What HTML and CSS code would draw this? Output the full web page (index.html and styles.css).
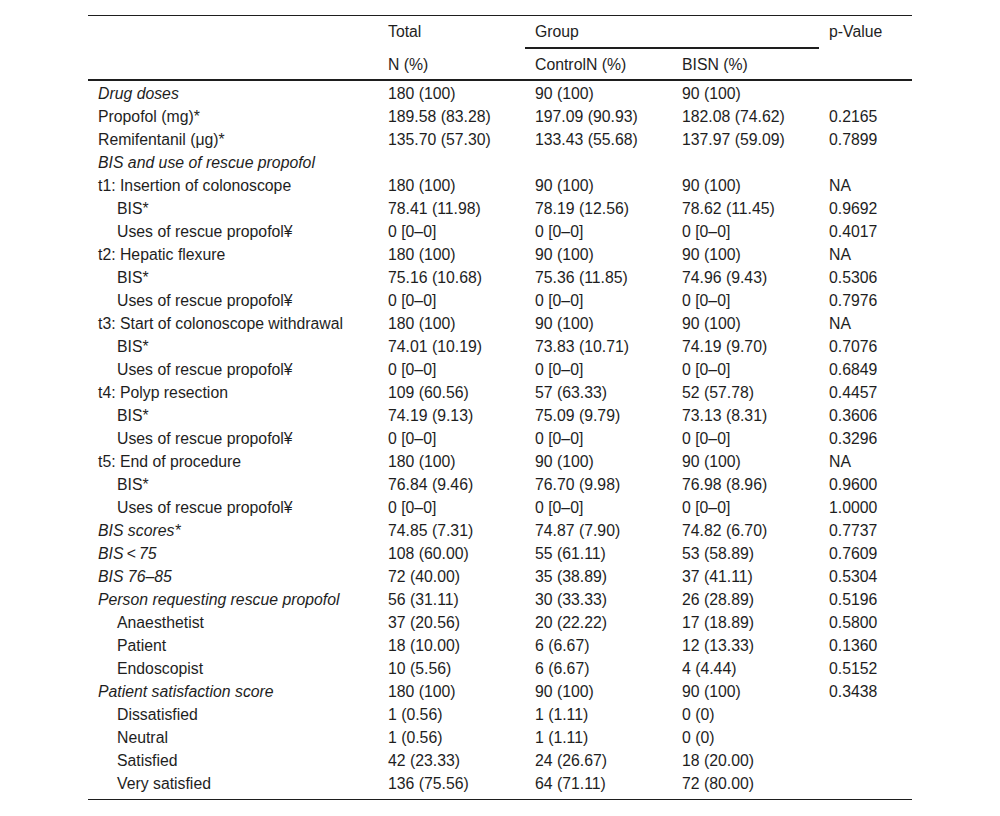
FILE: index.html
```html
<!DOCTYPE html>
<html lang="en">
<head>
<meta charset="utf-8">
<title>Table</title>
<link rel="stylesheet" href="styles.css">
</head>
<body>
<table class="data">
  <colgroup>
    <col class="c-label"><col class="c-num"><col class="c-num"><col class="c-num"><col class="c-p">
  </colgroup>
  <thead>
    <tr>
      <th rowspan="2" class="span2"></th>
      <th>Total</th>
      <th colspan="2" class="group">Group</th>
      <th rowspan="2" class="span2">p-Value</th>
    </tr>
    <tr class="sub">
      <th>N (%)</th>
      <th>ControlN (%)</th>
      <th>BISN (%)</th>
    </tr>
  </thead>
  <tbody>
    <tr><td class="sec">Drug doses</td><td>180 (100)</td><td>90 (100)</td><td>90 (100)</td><td></td></tr>
    <tr><td>Propofol (mg)*</td><td>189.58 (83.28)</td><td>197.09 (90.93)</td><td>182.08 (74.62)</td><td>0.2165</td></tr>
    <tr><td>Remifentanil (μg)*</td><td>135.70 (57.30)</td><td>133.43 (55.68)</td><td>137.97 (59.09)</td><td>0.7899</td></tr>
    <tr><td class="sec">BIS and use of rescue propofol</td><td></td><td></td><td></td><td></td></tr>
    <tr><td>t1: Insertion of colonoscope</td><td>180 (100)</td><td>90 (100)</td><td>90 (100)</td><td>NA</td></tr>
    <tr><td class="ind">BIS*</td><td>78.41 (11.98)</td><td>78.19 (12.56)</td><td>78.62 (11.45)</td><td>0.9692</td></tr>
    <tr><td class="ind">Uses of rescue propofol¥</td><td>0 [0–0]</td><td>0 [0–0]</td><td>0 [0–0]</td><td>0.4017</td></tr>
    <tr><td>t2: Hepatic flexure</td><td>180 (100)</td><td>90 (100)</td><td>90 (100)</td><td>NA</td></tr>
    <tr><td class="ind">BIS*</td><td>75.16 (10.68)</td><td>75.36 (11.85)</td><td>74.96 (9.43)</td><td>0.5306</td></tr>
    <tr><td class="ind">Uses of rescue propofol¥</td><td>0 [0–0]</td><td>0 [0–0]</td><td>0 [0–0]</td><td>0.7976</td></tr>
    <tr><td>t3: Start of colonoscope withdrawal</td><td>180 (100)</td><td>90 (100)</td><td>90 (100)</td><td>NA</td></tr>
    <tr><td class="ind">BIS*</td><td>74.01 (10.19)</td><td>73.83 (10.71)</td><td>74.19 (9.70)</td><td>0.7076</td></tr>
    <tr><td class="ind">Uses of rescue propofol¥</td><td>0 [0–0]</td><td>0 [0–0]</td><td>0 [0–0]</td><td>0.6849</td></tr>
    <tr><td>t4: Polyp resection</td><td>109 (60.56)</td><td>57 (63.33)</td><td>52 (57.78)</td><td>0.4457</td></tr>
    <tr><td class="ind">BIS*</td><td>74.19 (9.13)</td><td>75.09 (9.79)</td><td>73.13 (8.31)</td><td>0.3606</td></tr>
    <tr><td class="ind">Uses of rescue propofol¥</td><td>0 [0–0]</td><td>0 [0–0]</td><td>0 [0–0]</td><td>0.3296</td></tr>
    <tr><td>t5: End of procedure</td><td>180 (100)</td><td>90 (100)</td><td>90 (100)</td><td>NA</td></tr>
    <tr><td class="ind">BIS*</td><td>76.84 (9.46)</td><td>76.70 (9.98)</td><td>76.98 (8.96)</td><td>0.9600</td></tr>
    <tr><td class="ind">Uses of rescue propofol¥</td><td>0 [0–0]</td><td>0 [0–0]</td><td>0 [0–0]</td><td>1.0000</td></tr>
    <tr><td class="sec">BIS scores*</td><td>74.85 (7.31)</td><td>74.87 (7.90)</td><td>74.82 (6.70)</td><td>0.7737</td></tr>
    <tr><td class="sec">BIS&#8201;&lt;&#8201;75</td><td>108 (60.00)</td><td>55 (61.11)</td><td>53 (58.89)</td><td>0.7609</td></tr>
    <tr><td class="sec">BIS 76–85</td><td>72 (40.00)</td><td>35 (38.89)</td><td>37 (41.11)</td><td>0.5304</td></tr>
    <tr><td class="sec">Person requesting rescue propofol</td><td>56 (31.11)</td><td>30 (33.33)</td><td>26 (28.89)</td><td>0.5196</td></tr>
    <tr><td class="ind">Anaesthetist</td><td>37 (20.56)</td><td>20 (22.22)</td><td>17 (18.89)</td><td>0.5800</td></tr>
    <tr><td class="ind">Patient</td><td>18 (10.00)</td><td>6 (6.67)</td><td>12 (13.33)</td><td>0.1360</td></tr>
    <tr><td class="ind">Endoscopist</td><td>10 (5.56)</td><td>6 (6.67)</td><td>4 (4.44)</td><td>0.5152</td></tr>
    <tr><td class="sec">Patient satisfaction score</td><td>180 (100)</td><td>90 (100)</td><td>90 (100)</td><td>0.3438</td></tr>
    <tr><td class="ind">Dissatisfied</td><td>1 (0.56)</td><td>1 (1.11)</td><td>0 (0)</td><td></td></tr>
    <tr><td class="ind">Neutral</td><td>1 (0.56)</td><td>1 (1.11)</td><td>0 (0)</td><td></td></tr>
    <tr><td class="ind">Satisfied</td><td>42 (23.33)</td><td>24 (26.67)</td><td>18 (20.00)</td><td></td></tr>
    <tr class="last"><td class="ind">Very satisfied</td><td>136 (75.56)</td><td>64 (71.11)</td><td>72 (80.00)</td><td></td></tr>
  </tbody>
</table>
</body>
</html>
```

FILE: styles.css
```css
html, body {
  margin: 0;
  padding: 0;
  background: #ffffff;
}

body {
  font-family: "Liberation Sans", Arial, sans-serif;
  font-size: 15.8px;
  line-height: 18px;
  color: #1e1e1e;
}

.data {
  width: 824px;
  margin: 15px auto 0;
  table-layout: fixed;
  border-collapse: separate;
  border-spacing: 0;
  border-top: 1px solid #1e1e1e;
  border-bottom: 1px solid #1e1e1e;
}

.c-label { width: 290px; }
.c-num { width: 147px; }
.c-p { width: 93px; }

.data th {
  font-weight: normal;
  text-align: left;
  vertical-align: top;
  padding: 7px 10px 6px;
  white-space: nowrap;
}

.data th.group {
  border-bottom: 2px solid #1e1e1e;
}

.data th.span2,
.data tr.sub th {
  border-bottom: 2px solid #1e1e1e;
}

.data tr.sub th {
  padding: 7px 10px 5px;
}

.data td {
  text-align: left;
  vertical-align: top;
  padding: 4px 10px 1px;
  white-space: nowrap;
}

.data td.sec {
  font-style: italic;
}

.data td.ind {
  padding-left: 29px;
}

.data tr.last td {
  padding-bottom: 6px;
}
```
